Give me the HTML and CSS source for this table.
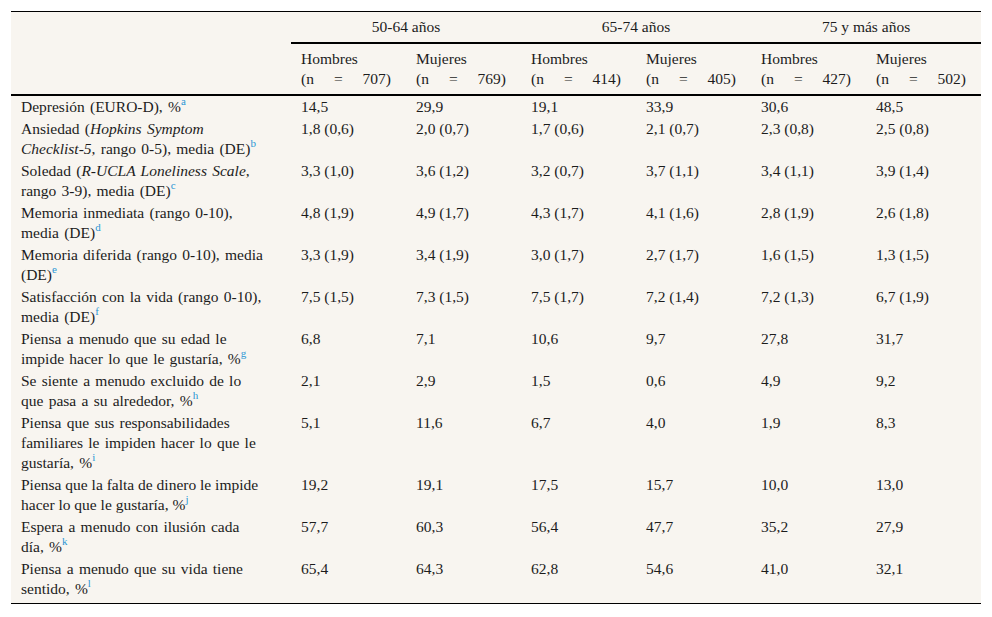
FILE: index.html
```html
<!DOCTYPE html>
<html lang="es">
<head>
<meta charset="utf-8">
<title>Tabla</title>
<link rel="stylesheet" href="styles.css">
</head>
<body>
<div class="wrap">
<table class="tbl">
  <colgroup>
    <col class="c-label">
    <col class="c-data"><col class="c-data"><col class="c-data"><col class="c-data"><col class="c-data"><col class="c-data">
  </colgroup>
  <thead>
    <tr class="h1">
      <th class="corner" rowspan="2"></th>
      <th class="grp" colspan="2">50-64 años</th>
      <th class="grp" colspan="2">65-74 años</th>
      <th class="grp" colspan="2">75 y más años</th>
    </tr>
    <tr class="h2">
      <th><div>Hombres</div><div class="n"><span>(n</span><span>=</span><span>707)</span></div></th>
      <th><div>Mujeres</div><div class="n"><span>(n</span><span>=</span><span>769)</span></div></th>
      <th><div>Hombres</div><div class="n"><span>(n</span><span>=</span><span>414)</span></div></th>
      <th><div>Mujeres</div><div class="n"><span>(n</span><span>=</span><span>405)</span></div></th>
      <th><div>Hombres</div><div class="n"><span>(n</span><span>=</span><span>427)</span></div></th>
      <th><div>Mujeres</div><div class="n"><span>(n</span><span>=</span><span>502)</span></div></th>
    </tr>
  </thead>
  <tbody>
    <tr><td>Depresión (EURO-D), %<sup>a</sup></td><td>14,5</td><td>29,9</td><td>19,1</td><td>33,9</td><td>30,6</td><td>48,5</td></tr>
    <tr><td>Ansiedad (<i>Hopkins Symptom <span class="nw">Checklist-5</span></i>, rango 0-5), media (DE)<sup>b</sup></td><td>1,8 (0,6)</td><td>2,0 (0,7)</td><td>1,7 (0,6)</td><td>2,1 (0,7)</td><td>2,3 (0,8)</td><td>2,5 (0,8)</td></tr>
    <tr><td>Soledad (<i>R-UCLA Loneliness Scale</i>, rango 3-9), media (DE)<sup>c</sup></td><td>3,3 (1,0)</td><td>3,6 (1,2)</td><td>3,2 (0,7)</td><td>3,7 (1,1)</td><td>3,4 (1,1)</td><td>3,9 (1,4)</td></tr>
    <tr><td>Memoria inmediata (rango 0-10), media (DE)<sup>d</sup></td><td>4,8 (1,9)</td><td>4,9 (1,7)</td><td>4,3 (1,7)</td><td>4,1 (1,6)</td><td>2,8 (1,9)</td><td>2,6 (1,8)</td></tr>
    <tr><td>Memoria diferida (rango 0-10), media (DE)<sup>e</sup></td><td>3,3 (1,9)</td><td>3,4 (1,9)</td><td>3,0 (1,7)</td><td>2,7 (1,7)</td><td>1,6 (1,5)</td><td>1,3 (1,5)</td></tr>
    <tr><td>Satisfacción con la vida (rango 0-10), media (DE)<sup>f</sup></td><td>7,5 (1,5)</td><td>7,3 (1,5)</td><td>7,5 (1,7)</td><td>7,2 (1,4)</td><td>7,2 (1,3)</td><td>6,7 (1,9)</td></tr>
    <tr><td>Piensa a menudo que su edad le impide hacer lo que le gustaría, %<sup>g</sup></td><td>6,8</td><td>7,1</td><td>10,6</td><td>9,7</td><td>27,8</td><td>31,7</td></tr>
    <tr><td>Se siente a menudo excluido de lo que pasa a su alrededor, %<sup>h</sup></td><td>2,1</td><td>2,9</td><td>1,5</td><td>0,6</td><td>4,9</td><td>9,2</td></tr>
    <tr><td>Piensa que sus responsabilidades familiares le impiden hacer lo que le gustaría, %<sup>i</sup></td><td>5,1</td><td>11,6</td><td>6,7</td><td>4,0</td><td>1,9</td><td>8,3</td></tr>
    <tr><td class="tight">Piensa que la falta de dinero le impide hacer lo que le gustaría, %<sup>j</sup></td><td>19,2</td><td>19,1</td><td>17,5</td><td>15,7</td><td>10,0</td><td>13,0</td></tr>
    <tr><td>Espera a menudo con ilusión cada día, %<sup>k</sup></td><td>57,7</td><td>60,3</td><td>56,4</td><td>47,7</td><td>35,2</td><td>27,9</td></tr>
    <tr class="last"><td>Piensa a menudo que su vida tiene sentido, %<sup>l</sup></td><td>65,4</td><td>64,3</td><td>62,8</td><td>54,6</td><td>41,0</td><td>32,1</td></tr>
  </tbody>
</table>
</div>
</body>
</html>
```

FILE: styles.css
```css
html, body {
  margin: 0;
  padding: 0;
  background: #ffffff;
}
.wrap {
  padding: 11px 11px 0 11px;
}
.tbl {
  border-collapse: separate;
  border-spacing: 0;
  table-layout: fixed;
  width: 970px;
  background: #f8f5f0;
  font-family: "Liberation Serif", "Times New Roman", serif;
  font-size: 15.5px;
  line-height: 20px;
  color: #1c1c1c;
  border-top: 1px solid #000;
  border-bottom: 1px solid #000;
}
.c-label { width: 280px; }
.c-data { width: 115px; }

.tbl th {
  font-weight: normal;
  text-align: left;
  vertical-align: top;
}
.h1 th {
  padding: 5px 10px;
}
.h1 .grp {
  text-align: center;
  border-bottom: 2px solid #000;
}
.h1 .corner {
  border-bottom: 2px solid #000;
}
.h2 th {
  padding: 5px 15px 5px 10px;
  border-bottom: 2px solid #000;
}
.n {
  display: flex;
  justify-content: space-between;
}
.tbl td {
  vertical-align: top;
  padding: 1px 15px 1px 10px;
}
.tbl td:first-child {
  padding-right: 28px;
  word-spacing: 1.4px;
}
.tbl td.tight {
  word-spacing: 0;
}
.nw {
  white-space: nowrap;
}
.tbl tr.last td {
  padding-bottom: 4px;
}
sup {
  font-size: 11px;
  line-height: 0;
  vertical-align: 7px;
  color: #2a95d5;
  word-spacing: 0;
}
```
